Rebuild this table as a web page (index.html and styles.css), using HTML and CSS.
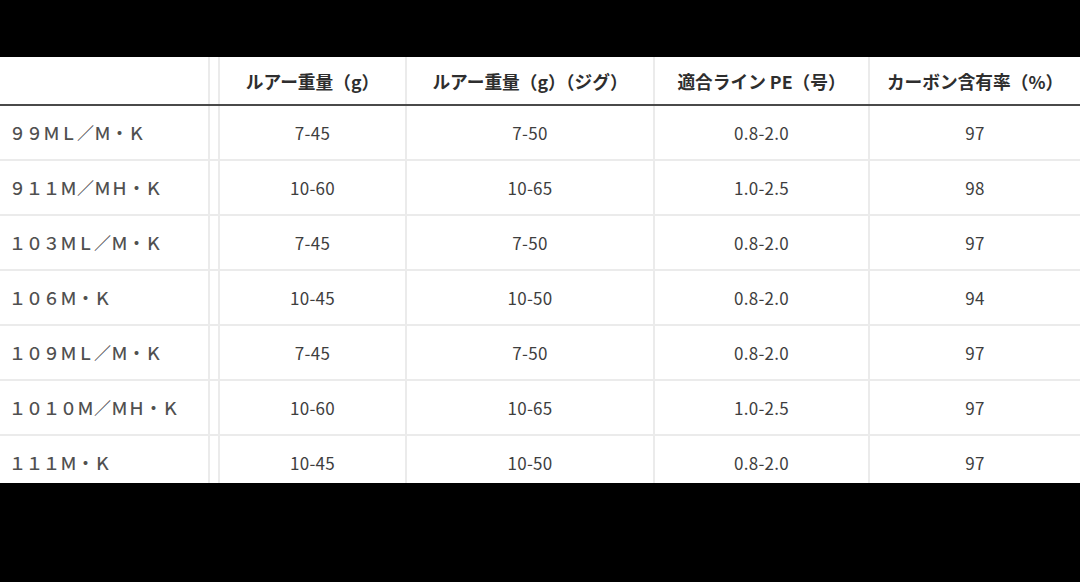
FILE: index.html
```html
<!DOCTYPE html>
<html lang="ja">
<head>
<meta charset="utf-8">
<title>スペック表</title>
<link rel="stylesheet" href="styles.css">
</head>
<body>
<div class="frame">
  <div class="sheet">
    <div class="row head">
      <div class="cell name"></div>
      <div class="cell gap"></div>
      <div class="cell">ルアー重量（g）</div>
      <div class="cell">ルアー重量（g）（ジグ）</div>
      <div class="cell">適合ライン PE（号）</div>
      <div class="cell">カーボン含有率（%）</div>
    </div>
    <div class="row">
      <div class="cell name">９９ＭＬ／Ｍ・Ｋ</div>
      <div class="cell gap"></div>
      <div class="cell">7-45</div>
      <div class="cell">7-50</div>
      <div class="cell">0.8-2.0</div>
      <div class="cell">97</div>
    </div>
    <div class="row">
      <div class="cell name">９１１Ｍ／ＭＨ・Ｋ</div>
      <div class="cell gap"></div>
      <div class="cell">10-60</div>
      <div class="cell">10-65</div>
      <div class="cell">1.0-2.5</div>
      <div class="cell">98</div>
    </div>
    <div class="row">
      <div class="cell name">１０３ＭＬ／Ｍ・Ｋ</div>
      <div class="cell gap"></div>
      <div class="cell">7-45</div>
      <div class="cell">7-50</div>
      <div class="cell">0.8-2.0</div>
      <div class="cell">97</div>
    </div>
    <div class="row">
      <div class="cell name">１０６Ｍ・Ｋ</div>
      <div class="cell gap"></div>
      <div class="cell">10-45</div>
      <div class="cell">10-50</div>
      <div class="cell">0.8-2.0</div>
      <div class="cell">94</div>
    </div>
    <div class="row">
      <div class="cell name">１０９ＭＬ／Ｍ・Ｋ</div>
      <div class="cell gap"></div>
      <div class="cell">7-45</div>
      <div class="cell">7-50</div>
      <div class="cell">0.8-2.0</div>
      <div class="cell">97</div>
    </div>
    <div class="row">
      <div class="cell name">１０１０Ｍ／ＭＨ・Ｋ</div>
      <div class="cell gap"></div>
      <div class="cell">10-60</div>
      <div class="cell">10-65</div>
      <div class="cell">1.0-2.5</div>
      <div class="cell">97</div>
    </div>
    <div class="row">
      <div class="cell name">１１１Ｍ・Ｋ</div>
      <div class="cell gap"></div>
      <div class="cell">10-45</div>
      <div class="cell">10-50</div>
      <div class="cell">0.8-2.0</div>
      <div class="cell">97</div>
    </div>
  </div>
</div>
</body>
</html>
```

FILE: styles.css
```css
* { box-sizing: border-box; }
html, body {
  margin: 0;
  padding: 0;
  background: #000;
}
.frame {
  width: 1080px;
  height: 582px;
  padding-top: 57px;
  background: #000;
}
.sheet {
  width: 1080px;
  height: 426px;
  background: #fff;
  overflow: hidden;
  font-family: "Noto Sans CJK JP", "Noto Sans", sans-serif;
}
.row {
  display: grid;
  grid-template-columns: 208px 10px 187px 248px 215px 212px;
  height: 55px;
  border-bottom: 2px solid #ebebeb;
}
.row.head {
  height: 49px;
  border-bottom: 2px solid #4a4a4a;
}
.cell {
  display: flex;
  align-items: center;
  justify-content: center;
  border-left: 2px solid #ebebeb;
  font-size: 17px;
  letter-spacing: 0.3px;
  color: #3e3e3e;
  white-space: nowrap;
}
.cell.name {
  border-left: none;
  justify-content: flex-start;
  padding-left: 9px;
  font-size: 17px;
  letter-spacing: 0;
  font-weight: 500;
  color: #505050;
}
.head .cell {
  font-size: 17.7px;
  letter-spacing: 0;
  font-weight: 700;
  color: #2e2e2e;
}
```
